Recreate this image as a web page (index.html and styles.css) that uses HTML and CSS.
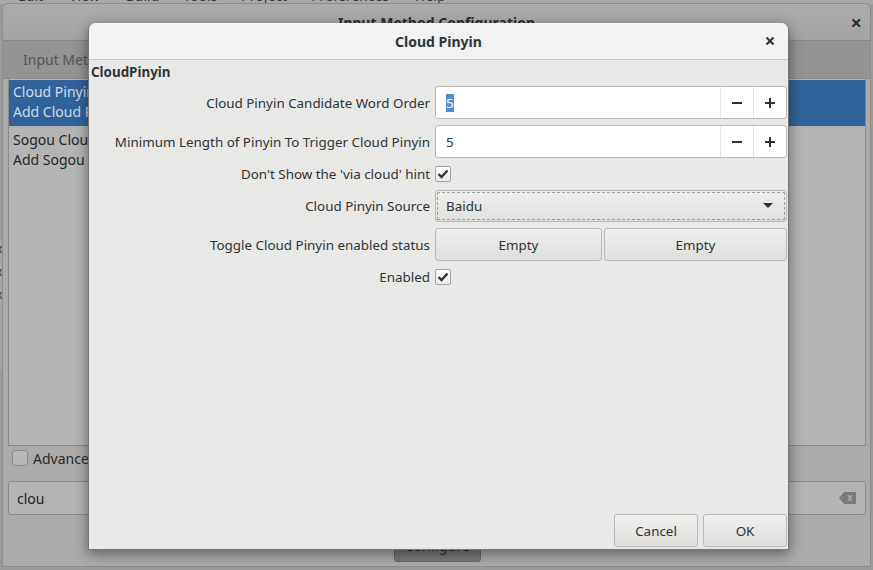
FILE: index.html
```html
<!DOCTYPE html>
<html>
<head>
<meta charset="utf-8">
<link rel="stylesheet" href="styles.css">
</head>
<body>
<div class="desk">
  <div class="menustrip">
    <span>Edit</span><span>View</span><span>Build</span><span>Tools</span><span>Project</span><span>Preferences</span><span>Help</span>
  </div>
  <div class="behind">
    <span>x</span><span>x</span><span>x</span>
  </div>
  <div class="parent">
    <div class="p-title">
      <span class="p-title-text">Input Method Configuration</span>
      <span class="p-close">×</span>
    </div>
    <div class="p-tabs"><span class="p-tab">Input Method</span></div>
    <div class="p-body">
      <div class="p-list">
        <div class="p-item sel"><div>Cloud Pinyin</div><div>Add Cloud Pinyin support to Pinyin</div></div>
        <div class="p-item"><div>Sogou Cloud Pinyin</div><div>Add Sogou Cloud Pinyin support</div></div>
      </div>
      <div class="p-adv"><span class="p-check"></span><span class="p-adv-text">Advanced</span></div>
      <div class="p-search"><span>clou</span>
        <svg class="p-clear" width="18" height="14" viewBox="0 0 18 14"><path d="M5 1 H17 V13 H5 L0 7 Z" fill="#7a7a7a"/><path d="M9 4 L13 10 M13 4 L9 10" stroke="#a8a8a8" stroke-width="1.6"/></svg>
      </div>
      <div class="p-foot"><span class="p-btn">Configure</span></div>
    </div>
  </div>

  <div class="dialog">
    <div class="d-title">
      <span class="d-title-text">Cloud Pinyin</span>
      <span class="d-close">
        <svg width="10" height="10" viewBox="0 0 10 10"><path d="M1.5 1.5 L8.5 8.5 M8.5 1.5 L1.5 8.5" stroke="#2e3436" stroke-width="2"/></svg>
      </span>
    </div>
    <div class="d-body">
      <div class="d-head">CloudPinyin</div>
      <div class="form">
        <label class="lbl">Cloud Pinyin Candidate Word Order</label>
        <div class="spin">
          <span class="spin-val"><span class="selected">5</span></span>
          <span class="spin-btn"><svg width="12" height="12" viewBox="0 0 12 12"><path d="M1 6 H11" stroke="#2e3436" stroke-width="2"/></svg></span>
          <span class="spin-btn"><svg width="12" height="12" viewBox="0 0 12 12"><path d="M1 6 H11 M6 1 V11" stroke="#2e3436" stroke-width="2"/></svg></span>
        </div>

        <label class="lbl">Minimum Length of Pinyin To Trigger Cloud Pinyin</label>
        <div class="spin">
          <span class="spin-val">5</span>
          <span class="spin-btn"><svg width="12" height="12" viewBox="0 0 12 12"><path d="M1 6 H11" stroke="#2e3436" stroke-width="2"/></svg></span>
          <span class="spin-btn"><svg width="12" height="12" viewBox="0 0 12 12"><path d="M1 6 H11 M6 1 V11" stroke="#2e3436" stroke-width="2"/></svg></span>
        </div>

        <label class="lbl">Don't Show the 'via cloud' hint</label>
        <div class="chkcell"><span class="chk"><svg width="14" height="14" viewBox="0 0 14 14"><path d="M2.5 7 L5.5 10 L11.5 3.5" fill="none" stroke="#2e3436" stroke-width="2.4"/></svg></span></div>

        <label class="lbl">Cloud Pinyin Source</label>
        <div class="combo"><span>Baidu</span><svg width="10" height="6" viewBox="0 0 10 6"><path d="M0 0 H10 L5 5 Z" fill="#2e3436"/></svg></div>

        <label class="lbl">Toggle Cloud Pinyin enabled status</label>
        <div class="pair"><span class="btn">Empty</span><span class="btn">Empty</span></div>

        <label class="lbl">Enabled</label>
        <div class="chkcell"><span class="chk"><svg width="14" height="14" viewBox="0 0 14 14"><path d="M2.5 7 L5.5 10 L11.5 3.5" fill="none" stroke="#2e3436" stroke-width="2.4"/></svg></span></div>
      </div>
      <div class="d-actions">
        <span class="btn act">Cancel</span>
        <span class="btn act">OK</span>
      </div>
    </div>
  </div>
</div>
</body>
</html>
```

FILE: styles.css
```css
* { box-sizing: border-box; }
html, body { margin: 0; padding: 0; }
body {
  width: 873px; height: 570px; overflow: hidden;
  font-family: "Noto Sans", "Open Sans", sans-serif;
  font-size: 13.4px; color: #2e3436;
  background: #2a2a2a;
}
.desk { position: relative; width: 873px; height: 570px; background: #9b9b9b; overflow: hidden; }

.menustrip {
  position: absolute; left: 0; top: 0; width: 873px; height: 4px; overflow: hidden;
  background: #a9a9a9; display: flex; gap: 0; font-size: 14px; color: #3a3a3a;
}
.menustrip span { margin-top: -12px; line-height: 16px; }
.menustrip span:nth-child(1) { margin-left: 18px; }
.menustrip span:nth-child(2) { margin-left: 26px; }
.menustrip span:nth-child(3) { margin-left: 26px; }
.menustrip span:nth-child(4) { margin-left: 24px; }
.menustrip span:nth-child(5) { margin-left: 24px; }
.menustrip span:nth-child(6) { margin-left: 24px; }
.menustrip span:nth-child(7) { margin-left: 26px; }

.behind {
  position: absolute; left: -4px; top: 240px; width: 6px; height: 130px;
  display: flex; flex-direction: column; gap: 6px; font-size: 12px; color: #333; background: #a5a5a5;
}

.parent {
  position: absolute; left: 2px; top: 3px; width: 869px; height: 564px;
  background: #ababab; border-radius: 6px 6px 0 0;
  border: 1px solid #8d8d8d; display: flex; flex-direction: column;
}
.p-title {
  height: 37px; flex: none; display: flex; align-items: center; justify-content: center;
  position: relative; background: linear-gradient(#acacac, #a4a4a4);
  border-bottom: 1px solid #858585; border-radius: 6px 6px 0 0;
  font-size: 14px;
}
.p-title-text { font-weight: bold; color: #2d2d2d; }
.p-close { position: absolute; right: 8px; top: 5px; font-size: 20px; font-weight: bold; color: #2d2d2d; }
.p-tabs {
  height: 38px; flex: none; background: #939393; display: flex; align-items: center;
  padding-left: 20px; border-bottom: 1px solid #8a8a8a; font-size: 14px;
}
.p-tab { color: #555; }
.p-body { flex: 1; padding: 0 4px 0 5px; display: flex; flex-direction: column; font-size: 14px; }
.p-list {
  height: 367px; flex: none; background: #b4b4b4; border: 1px solid #8a8a8a; border-top: none;
  padding-top: 1px;
}
.p-item { padding: 2px 4px 4px; line-height: 20px; color: #262626; }
.p-item div { width: 76px; overflow: hidden; white-space: nowrap; }
.p-item.sel { background: #31639b; color: #d0dae6; height: 46px; margin-bottom: 2px; }
.p-adv { height: 24px; flex: none; display: flex; align-items: center; gap: 5px; padding-left: 4px; color: #2a2a2a; }
.p-adv-text { width: 56px; overflow: hidden; white-space: nowrap; }
.p-check { width: 16px; height: 16px; border: 1px solid #8a8a8a; border-radius: 3px; background: #b7b7b7; }
.p-search {
  margin-top: 11px; height: 34px; flex: none; border: 1px solid #8a8a8a; border-radius: 3px;
  background: #b4b4b4; display: flex; align-items: center; justify-content: space-between;
  padding: 0 8px 0 8px; color: #222;
}
.p-foot { flex: 1; display: flex; justify-content: center; align-items: flex-end; padding-bottom: 4px; }
.p-btn {
  width: 87px; height: 25px; border: 1px solid #6a6a6a; border-radius: 3px;
  background: #7a7a7a; color: #2a2a2a; text-align: center; line-height: 16px; overflow: hidden;
}

.dialog {
  position: absolute; left: 88px; top: 23px; width: 701px; height: 527px;
  background: #e8e8e7; border: 1px solid #767676; border-top: none; border-radius: 7px 7px 0 0;
  box-shadow: 0 4px 14px rgba(0,0,0,0.45);
  display: flex; flex-direction: column;
}
.d-title {
  height: 37px; flex: none; position: relative; display: flex; align-items: center; justify-content: center;
  background: #f2f2f2; border-bottom: 1px solid #c8c8c6; border-radius: 7px 7px 0 0;
  font-size: 14px;
}
.d-title-text { font-weight: bold; color: #2e3436; }
.d-close { position: absolute; right: 13px; top: 13px; width: 10px; height: 10px; display: flex; }
.d-body { flex: 1; display: flex; flex-direction: column; padding: 2px 1px 2px 1px; }
.d-head { font-weight: bold; height: 24px; line-height: 20px; padding-left: 1px; }
.form {
  display: grid; grid-template-columns: 340px 352px; column-gap: 5px; row-gap: 6px;
  align-items: center;
}
.lbl { text-align: right; }
.spin {
  height: 33px; background: #fff; border: 1px solid #b8b8b5; border-radius: 3px;
  display: flex; align-items: stretch;
}
.spin-val { flex: 1; display: flex; align-items: center; padding-left: 10px; color: #2e3436; }
.selected { background: #4a90d9; color: #fff; line-height: 18px; }
.spin-btn {
  width: 33px; flex: none; display: flex; align-items: center; justify-content: center;
  border-left: 1px solid #e4e4e2;
}
.chkcell { height: 20px; display: flex; align-items: center; }
.chk {
  width: 16px; height: 16px; border: 1px solid #a1a1a0; border-radius: 2px;
  background: linear-gradient(#fdfdfd, #eaeaea); display: flex; align-items: center; justify-content: center;
}
.combo {
  height: 32px; border: 1px solid #b8b8b5; border-radius: 3px;
  background: linear-gradient(#ededec, #e1e1e0);
  outline: 1px dashed rgba(46,52,54,0.4); outline-offset: -3px;
  display: flex; align-items: center; justify-content: space-between; padding: 0 13px 0 10px;
}
.pair { display: flex; gap: 2px; }
.btn {
  height: 33px; border: 1px solid #b8b8b5; border-radius: 3px;
  background: linear-gradient(#eeeeed, #dededd);
  display: flex; align-items: center; justify-content: center; color: #2e3436;
}
.pair .btn:first-child { width: 167px; }
.pair .btn:last-child { flex: 1; }
.d-actions { margin-top: auto; display: flex; justify-content: flex-end; gap: 5px; padding-right: 0; }
.btn.act { width: 84px; }
```
